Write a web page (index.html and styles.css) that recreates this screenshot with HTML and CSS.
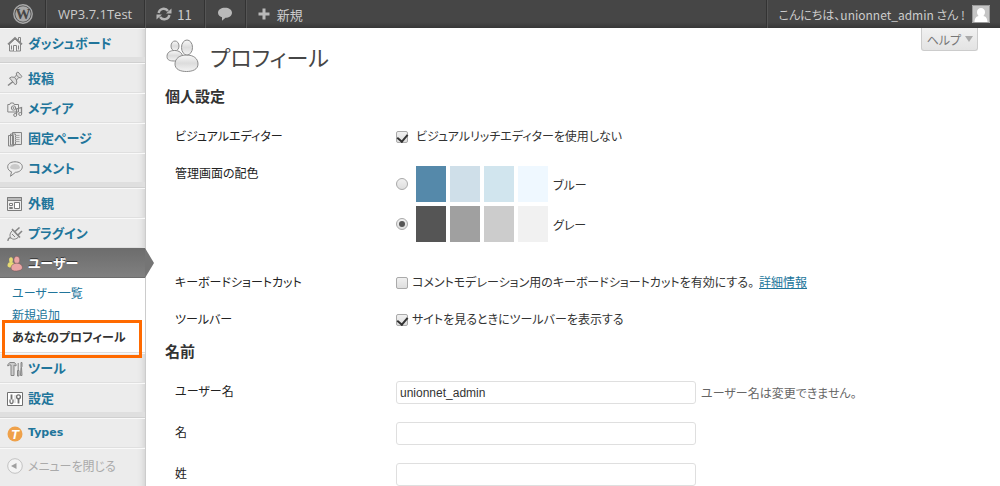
FILE: index.html
```
<!DOCTYPE html>
<html lang="ja">
<head>
<meta charset="utf-8">
<title>プロフィール ‹ WP3.7.1Test</title>
<link rel="stylesheet" href="styles.css">
</head>
<body>
<header class="adminbar">
  <a class="bar-item bar-logo" href="#" aria-label="WordPress">
    <svg width="20" height="20" viewBox="0 0 20 20"><circle cx="10" cy="10" r="9.2" fill="none" stroke="#a9a9a9" stroke-width="1.4"/><circle cx="10" cy="10" r="7.7" fill="#a9a9a9"/><text x="10" y="15.2" text-anchor="middle" font-family="Liberation Serif, serif" font-weight="bold" font-size="15" fill="#464646">W</text></svg>
  </a>
  <a class="bar-item bar-site" href="#">WP3.7.1Test</a>
  <a class="bar-item bar-updates" href="#">
    <svg width="16" height="14" viewBox="0 0 16 14" fill="none" stroke="#b4b4b4" stroke-width="2.4"><path d="M2.6 6A5.2 5.2 0 0 1 12 4"/><path d="M13.4 8A5.2 5.2 0 0 1 4 10"/><path d="M15.500 1.500v5h-5.500z" fill="#b4b4b4" stroke="none"/><path d="M.5 12.500v-5h5.500z" fill="#b4b4b4" stroke="none"/></svg>
    <span>11</span>
  </a>
  <a class="bar-item bar-comments" href="#" aria-label="コメント">
    <svg width="16" height="14" viewBox="0 0 16 14"><path d="M8 .8c4 0 7 2 7 5s-3 5-6.500 5L5 13.800v-3.500C2.500 9.500 1 8 1 5.800c0-3 3-5 7-5z" fill="#b9b9b9"/></svg>
  </a>
  <a class="bar-item bar-new" href="#">
    <svg width="12" height="12" viewBox="0 0 12 12"><path d="M4.500 .5h3v4H11.500v3H7.500v4h-3v-4H.5v-3h4z" fill="#b9b9b9"/></svg>
    <span>新規</span>
  </a>
  <a class="bar-item bar-account" href="#">
    <span>こんにちは、unionnet_admin さん !</span>
    <svg width="18" height="18" viewBox="0 0 18 18"><path d="M0 0h18v18H0z" fill="#c5c5c5"/><path d="M9 3a4 4 0 0 1 4 4.200C13 9 12 10.300 11.300 11c2.500.5 4 2 4.200 6h-13c.2-4 1.700-5.500 4.200-6C6 10.300 5 9 5 7.200A4 4 0 0 1 9 3z" fill="#fff"/><path d="M.5.5h17v17H.5z" fill="none" stroke="#999"/></svg>
  </a>
</header>

<div class="wrap">
  <nav class="menu">
    <ul class="menu-list">
      <li class="menu-item"><a class="menu-link" href="#">
        <svg class="menu-icon" viewBox="0 0 16 16" fill="#eee" stroke="#858585"><path d="M11.500 4V1.500h2V6"/><path d="M2.500 8v7h11V8L8 3z"/><path d="M1 8.300l7-6.500 7 6.500" fill="none" stroke-width="1.700"/><path d="M6.500 15V9.500h3V15M4.500 9.500v4M11.500 9.500v4"/></svg>ダッシュボード</a></li>
      <li class="menu-sep"></li>
      <li class="menu-item"><a class="menu-link" href="#">
        <svg class="menu-icon" viewBox="0 0 16 16" fill="#ddd" stroke="#858585"><path d="M1 14.500l5-4" stroke-width="1.600"/><path d="M2.500 7l2-1 3 .3 2-2.300-.2-2L11 1l4 4.500-1.500 1.300-1.700-.3L9.500 9l.3 3-1.300 2z"/><path d="M9.500 4l2.500 2.700M7.500 6.300L9.500 9" fill="none"/></svg>投稿</a></li>
      <li class="menu-item"><a class="menu-link" href="#">
        <svg class="menu-icon" viewBox="0 0 16 16" fill="#eee" stroke="#858585"><path d="M.8 3.500h2l.7-1.500h3l.7 1.500h4.300v7.500H.8z"/><circle cx="6.500" cy="7" r="2.200"/><circle cx="6.500" cy="7" r=".6"/><path d="M9.500 14V8l5-1.500V13" fill="none" stroke-width="1.300"/><circle cx="8.200" cy="14" r="1.500"/><circle cx="13.200" cy="13" r="1.500"/></svg>メディア</a></li>
      <li class="menu-item"><a class="menu-link" href="#">
        <svg class="menu-icon" viewBox="0 0 16 16" fill="#e4e4e4" stroke="#858585"><path d="M1.500 4.500h5v10.500h-5zM3.500 3h5v11h-5zM5.500 1.500h9v12h-9z"/><path d="M8 4.500h4.500M8 6.500h4.500M8 8.500h4.500M8 10.500h4.500" stroke="#aaa"/></svg>固定ページ</a></li>
      <li class="menu-item"><a class="menu-link" href="#">
        <svg class="menu-icon" viewBox="0 0 16 16" fill="#eee" stroke="#858585"><path d="M8 .8c4.300 0 7.300 2 7.300 5s-3 5.500-6.800 5.500L3.500 15.300l1-4.500C2.300 10 .7 8.300.7 5.800c0-3 3-5 7.300-5z"/><path d="M3 6.500c.5-2.500 2.500-3.500 5-3.500s4.500 1 5 3.500S3 9 3 6.500z" fill="#c9c9c9" stroke="none"/></svg>コメント</a></li>
      <li class="menu-sep"></li>
      <li class="menu-item"><a class="menu-link" href="#">
        <svg class="menu-icon" viewBox="0 0 16 16" fill="#eee" stroke="#7c7c7c"><path d="M.5 1.500h14v13H.5z"/><path d="M.5 1.500h14v3H.5z" fill="#bbb"/><path d="M2.500 7.500h3v2h-3zM2.500 11.500h3v1h-3zM7.500 6.500h5v6h-5z" fill="#fff"/></svg>外観</a></li>
      <li class="menu-item"><a class="menu-link" href="#">
        <svg class="menu-icon" viewBox="0 0 16 16" fill="#e8e8e8" stroke="#858585"><path d="M.8 14.800c.7-3 2-3.500 3.500-3" fill="none" stroke-width="1.500"/><path d="M6 4l6 6.500c-2.500 3-6 3.500-8 1.500S3 6.500 6 4z"/><path d="M5 3l8 8.500M8 5.500l4.500-4M11 9l4-4" fill="none" stroke-width="1.600"/><path d="M5 8l3 3" fill="none"/></svg>プラグイン</a></li>
      <li class="menu-item menu-item-current"><a class="menu-link" href="#">
        <svg class="menu-icon" viewBox="0 0 16 16"><ellipse cx="4" cy="4" rx="1.900" ry="2.800" fill="#e6da73"/><path d="M.5 9.500C.5 7 2 6 4 6s3.500 1 3.500 3.500S.5 12.500.5 9.500z" fill="#e6da73"/><ellipse cx="9.800" cy="4" rx="3" ry="3.800" fill="#eaa5a5" stroke="#6b5151" stroke-width=".5"/><path d="M4 12c0-3 2.500-4.800 5.800-4.800S15.500 9 15.500 12s-11.500 5-11.500 0z" fill="#eaa5a5" stroke="#6b5151" stroke-width=".5"/></svg>ユーザー</a>
        <svg class="menu-arrow" viewBox="0 0 9 30" aria-hidden="true"><path d="M0 0l9 15-9 15z" fill="#757575"/></svg></li>
      <li class="submenu"><ul class="submenu-list">
        <li><a class="submenu-link" href="#">ユーザー一覧</a></li>
        <li><a class="submenu-link" href="#">新規追加</a></li>
        <li class="submenu-current"><a class="submenu-link" href="#">あなたのプロフィール</a></li>
      </ul></li>
      <li class="menu-item"><a class="menu-link" href="#">
        <svg class="menu-icon" viewBox="0 0 16 16" fill="#ccc" stroke="#858585"><path d="M.8 5V3.500L3 1.500h4.500l1.500 2V5L7 4v10.500H4V4H2.500z"/><path d="M10.500 9.500h1.500v5.500h-1.500zM11.200 9.500V2M14 1.500h1v4l-.5 1 .5 8h-1.500l.5-8z"/></svg>ツール</a></li>
      <li class="menu-item"><a class="menu-link" href="#">
        <svg class="menu-icon" viewBox="0 0 16 16" fill="none" stroke="#707070"><path d="M.5 1.500h15v13H.5z" fill="#fff"/><path d="M4.500 3.500v5M11.500 12.500V8" stroke-width="1.800"/><path d="M3 8.500v2.500a1.500 1.500 0 0 0 3 0V8.500" stroke-width="1.300"/><circle cx="11.500" cy="5.800" r="1.900" stroke-width="1.400"/><path d="M8 4v8" stroke="#ccc"/></svg>設定</a></li>
      <li class="menu-sep"></li>
      <li class="menu-item"><a class="menu-link menu-link-latin" href="#">
        <svg class="menu-icon" viewBox="0 0 16 16"><circle cx="8" cy="8" r="7.500" fill="#efa14a"/><text x="8" y="13" text-anchor="middle" font-family="Liberation Sans, sans-serif" font-weight="bold" font-style="italic" font-size="13" fill="#fff">T</text></svg>Types</a></li>
    </ul>
    <button class="collapse" type="button">
      <svg class="menu-icon" viewBox="0 0 16 16"><circle cx="8" cy="8" r="7.300" fill="#f4f4f4" stroke="#c2c2c2"/><path d="M4 8l5.500-3v6z" fill="#a0a0a0"/></svg>メニューを閉じる</button>
  </nav>

  <main class="content">
    <button class="help" type="button">ヘルプ <span class="help-arrow"></span></button>
    <h1 class="title">
      <svg width="34" height="34" viewBox="0 0 34 34" fill="url(#skin)" stroke="#8c8c8c"><defs><linearGradient id="skin" x1="0" y1="0" x2="0" y2="1"><stop offset="0" stop-color="#f8f8f8"/><stop offset=".5" stop-color="#dcdcdc"/><stop offset="1" stop-color="#f4f4f4"/></linearGradient></defs><ellipse cx="10" cy="7" rx="4" ry="5"/><path d="M2 17.500c0-4 3-6 7.500-6s8 2.500 8 6-4 4.500-8 4.500-7.500-.5-7.500-4.500z"/><path d="M10 25c0-5.500 4.500-9 11.500-9S33 19.500 33 25s-5.500 7.500-11.500 7.500S10 30.500 10 25z"/><ellipse cx="22" cy="8.500" rx="5.500" ry="7.500"/></svg>
      プロフィール</h1>

    <form>
      <h2 class="section">個人設定</h2>
      <table class="form-table">
        <tr>
          <th scope="row">ビジュアルエディター</th>
          <td><label class="option option-wide"><input class="check" type="checkbox" checked>ビジュアルリッチエディターを使用しない</label></td>
        </tr>
        <tr>
          <th scope="row">管理画面の配色</th>
          <td class="colors">
            <label class="scheme"><input class="radio" type="radio" name="color"><span class="swatches"><span class="swatch blue-1"></span><span class="swatch blue-2"></span><span class="swatch blue-3"></span><span class="swatch blue-4"></span></span>ブルー</label>
            <label class="scheme"><input class="radio" type="radio" name="color" checked><span class="swatches"><span class="swatch gray-1"></span><span class="swatch gray-2"></span><span class="swatch gray-3"></span><span class="swatch gray-4"></span></span>グレー</label>
          </td>
        </tr>
        <tr>
          <th scope="row">キーボードショートカット</th>
          <td><div class="line"><label class="option"><input class="check" type="checkbox">コメントモデレーション用のキーボードショートカットを有効にする。</label><a class="more" href="#">詳細情報</a></div></td>
        </tr>
        <tr>
          <th scope="row">ツールバー</th>
          <td><label class="option"><input class="check" type="checkbox" checked>サイトを見るときにツールバーを表示する</label></td>
        </tr>
      </table>

      <h2 class="section">名前</h2>
      <table class="form-table">
        <tr>
          <th scope="row"><label for="user">ユーザー名</label></th>
          <td class="field"><div class="line"><input class="text" id="user" type="text" value="unionnet_admin" readonly><span class="note">ユーザー名は変更できません。</span></div></td>
        </tr>
        <tr>
          <th scope="row"><label for="first">名</label></th>
          <td class="field"><div class="line"><input class="text" id="first" type="text"></div></td>
        </tr>
        <tr>
          <th scope="row"><label for="last">姓</label></th>
          <td class="field"><div class="line"><input class="text" id="last" type="text"></div></td>
        </tr>
      </table>
    </form>
  </main>
</div>
</body>
</html>
```
FILE: styles.css
```
* { box-sizing: border-box; }
body {
  margin: 0;
  background: #fff;
  color: #333;
  font: 12px/17px "Noto Sans CJK JP", sans-serif;
  font-feature-settings: "palt";
}
button, input { font: inherit; font-feature-settings: inherit; }
ul { margin: 0; padding: 0; list-style: none; }
a { color: #21759b; text-decoration: none; }

.adminbar {
  display: flex;
  height: 28px;
  background: linear-gradient(#464646 80%, #373737);
}
.bar-item {
  display: flex;
  align-items: center;
  color: #ccc;
  font-size: 13px;
  border-right: 1px solid #333;
  box-shadow: 1px 0 #555;
}
.bar-logo { padding: 0 12px 0 13px; }
.bar-site { padding: 0 12px; font-family: "Open Sans", sans-serif; }
.bar-updates { gap: 5px; padding: 0 12px 0 11px; }
.bar-comments { padding: 0 12px; }
.bar-new { gap: 7px; padding: 0 12px; border: 0; box-shadow: none; }
.bar-account {
  gap: 7px;
  margin-left: auto;
  padding: 0 10px 0 12px;
  border-right: 0;
  border-left: 1px solid #333;
  box-shadow: inset 1px 0 #555;
  font-size: 12px;
}

.wrap { display: flex; min-height: calc(100vh - 28px); }
.menu {
  flex: none;
  width: 146px;
  background: #ececec;
  border-right: 1px solid #ccc;
  box-shadow: inset -6px 0 6px -5px #ccc;
}
.menu-item {
  position: relative;
  height: 30px;
  border-top: 1px solid #f9f9f9;
  border-bottom: 1px solid #dfdfdf;
}
.menu-link {
  display: flex;
  align-items: center;
  gap: 5px;
  height: 26px;
  padding-left: 7px;
  font-size: 13px;
  font-weight: bold;
}
.menu-link-latin { font-family: "DejaVu Sans", sans-serif; font-size: 11px; }
.menu-icon { flex: none; width: 16px; height: 16px; }
.menu-link .menu-icon { margin-top: 3px; }
.menu-sep {
  height: 5px;
  background: #dfdfdf;
  border-bottom: 1px solid #d0d0d0;
}
.menu-item-current {
  background: linear-gradient(#6d6d6d, #808080);
  border-color: #6d6d6d;
}
.menu-item-current .menu-link { color: #fff; text-shadow: 0 -1px #333; }
.menu-arrow {
  position: absolute;
  top: -1px;
  left: 100%;
  width: 9px;
  height: 30px;
}
.submenu {
  padding: 4px 0;
  background: #fff;
  border-bottom: 1px solid #dfdfdf;
}
.submenu-link { display: block; padding: 0 12px; line-height: 22px; }
.submenu-current { position: relative; }
.submenu-current .submenu-link { color: #333; font-weight: bold; }
.submenu-current::after {
  content: "";
  position: absolute;
  inset: -6px 3px -10px 2px;
  z-index: 1;
  border: 3px solid #ff6a00;
  pointer-events: none;
}
.collapse {
  display: flex;
  align-items: center;
  gap: 5px;
  width: 100%;
  height: 34px;
  padding: 0 7px;
  border: 0;
  border-top: 1px solid #f9f9f9;
  background: none;
  color: #aaa;
}

.content { position: relative; flex: 1; padding: 11px 20px 0 19px; }
.help {
  position: absolute;
  top: 0;
  right: 22px;
  display: flex;
  align-items: center;
  gap: 4px;
  height: 23px;
  padding: 0 4px 0 5px;
  border: 1px solid #ccc;
  border-top: 0;
  border-radius: 0 0 3px 3px;
  background: linear-gradient(#f1f1f1, #e3e3e3);
  color: #777;
}
.help-arrow {
  border: 4px solid transparent;
  border-top: 6px solid #aaa;
  border-bottom: 0;
}
.title {
  display: flex;
  align-items: center;
  gap: 11px;
  margin: 0 0 13px;
  color: #464646;
  font-size: 22px;
  font-weight: normal;
  line-height: 34px;
}
.section {
  margin: 0;
  font-size: 15px;
  font-weight: bold;
  line-height: 20px;
}
.form-table { width: 100%; margin: 11px 0 4px; border-collapse: collapse; }
.form-table th {
  width: 221px;
  padding: 10px;
  color: #222;
  font-weight: normal;
  text-align: left;
  vertical-align: top;
}
.form-table td { padding: 10px; vertical-align: top; }
.form-table .colors { padding: 12px 10px 21px; }
.form-table .field { padding: 9px 10px; }
.option { display: flex; align-items: center; gap: 4px; }
.option-wide { gap: 8px; }
.line { display: flex; align-items: center; gap: 5px; }
.more { text-decoration: underline; }
.scheme { display: flex; align-items: center; gap: 8px; }
.scheme + .scheme { margin-top: 4px; }
.swatches { display: flex; gap: 4px; margin-right: -3px; }
.swatch { width: 30px; height: 36px; }
.blue-1 { background: #5589aa; }
.blue-2 { background: #cfdfe9; }
.blue-3 { background: #d1e5ee; }
.blue-4 { background: #eff8ff; }
.gray-1 { background: #555; }
.gray-2 { background: #a0a0a0; }
.gray-3 { background: #ccc; }
.gray-4 { background: #f1f1f1; }
.check, .radio {
  flex: none;
  display: grid;
  place-items: center;
  appearance: none;
  width: 12px;
  height: 12px;
  margin: 0;
  border: 1px solid #aaa;
  border-radius: 2px;
  background: linear-gradient(#f0f0f0, #dedede);
}
.check { margin-top: 3px; }
.radio { border-radius: 50%; }
.check:checked::after {
  content: "";
  width: 5px;
  height: 8px;
  border: solid #333;
  border-width: 0 2px 2px 0;
  transform: rotate(40deg);
}
.radio:checked::after {
  content: "";
  width: 6px;
  height: 6px;
  border-radius: 50%;
  background: #555;
}
.text {
  width: 300px;
  height: 23px;
  padding: 0 3px;
  border: 1px solid #dfdfdf;
  border-radius: 3px;
  background: #fff;
  color: #333;
  font-family: "Liberation Sans", sans-serif;
}
.note { color: #666; }
```
